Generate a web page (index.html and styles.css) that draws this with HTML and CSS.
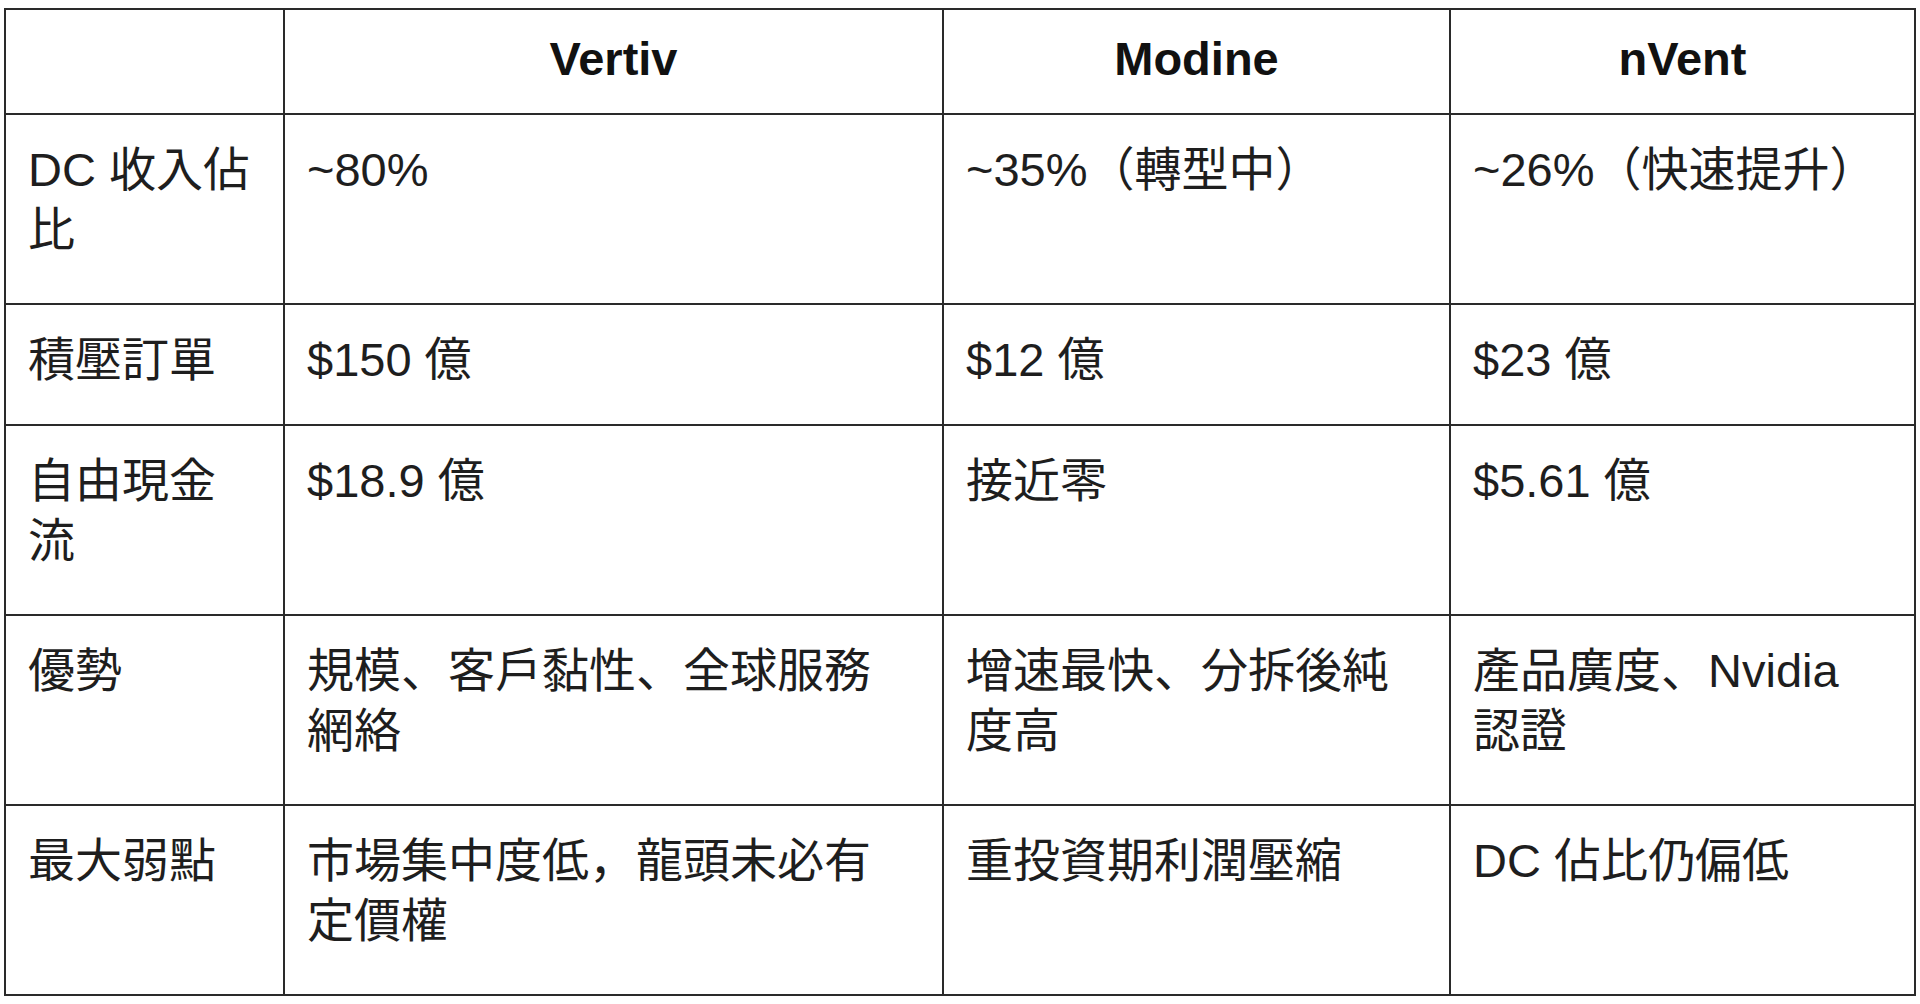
FILE: index.html
```html
<!DOCTYPE html>
<html lang="zh-Hant">
<head>
<meta charset="utf-8">
<title>比較表</title>
<link rel="stylesheet" href="styles.css">
</head>
<body>
<table class="compare">
  <colgroup>
    <col class="c-label">
    <col class="c-vertiv">
    <col class="c-modine">
    <col class="c-nvent">
  </colgroup>
  <thead>
    <tr class="row-head">
      <th></th>
      <th>Vertiv</th>
      <th>Modine</th>
      <th>nVent</th>
    </tr>
  </thead>
  <tbody>
    <tr class="row-tall">
      <td class="label">DC 收入佔比</td>
      <td>~80%</td>
      <td>~35%（轉型中）</td>
      <td>~26%（快速提升）</td>
    </tr>
    <tr class="row-short">
      <td class="label">積壓訂單</td>
      <td>$150 億</td>
      <td>$12 億</td>
      <td>$23 億</td>
    </tr>
    <tr class="row-tall">
      <td class="label">自由現金流</td>
      <td>$18.9 億</td>
      <td>接近零</td>
      <td>$5.61 億</td>
    </tr>
    <tr class="row-tall">
      <td class="label">優勢</td>
      <td>規模、客戶黏性、全球服務網絡</td>
      <td>增速最快、分拆後純度高</td>
      <td>產品廣度、Nvidia認證</td>
    </tr>
    <tr class="row-tall">
      <td class="label">最大弱點</td>
      <td>市場集中度低，龍頭未必有定價權</td>
      <td>重投資期利潤壓縮</td>
      <td>DC 佔比仍偏低</td>
    </tr>
  </tbody>
</table>
</body>
</html>
```

FILE: styles.css
```css
html, body {
  margin: 0;
  padding: 0;
  background: #ffffff;
}

body {
  padding: 8px 0 0 4px;
  font-family: "Liberation Sans", "Noto Sans CJK JP", "Noto Sans CJK TC", sans-serif;
  color: #1e1e1e;
}

.compare {
  border-collapse: collapse;
  table-layout: fixed;
  width: 1910px;
  font-size: 47px;
  line-height: 60px;
  font-feature-settings: "locl" 0;
}

.c-label { width: 279px; }
.c-vertiv { width: 659px; }
.c-modine { width: 507px; }
.c-nvent { width: 465px; }

.compare th,
.compare td {
  border: 2px solid #2a2a2a;
  vertical-align: top;
  text-align: left;
  padding: 25px 34px 0 22px;
  font-weight: 400;
  word-break: normal;
}

.compare td.label {
  padding-right: 24px;
}

.compare th {
  text-align: center;
  font-weight: 700;
  color: #111111;
  padding: 19px 10px 0 10px;
}

.row-head { height: 105px; }
.row-tall { height: 190px; }
.row-short { height: 121px; }
```
